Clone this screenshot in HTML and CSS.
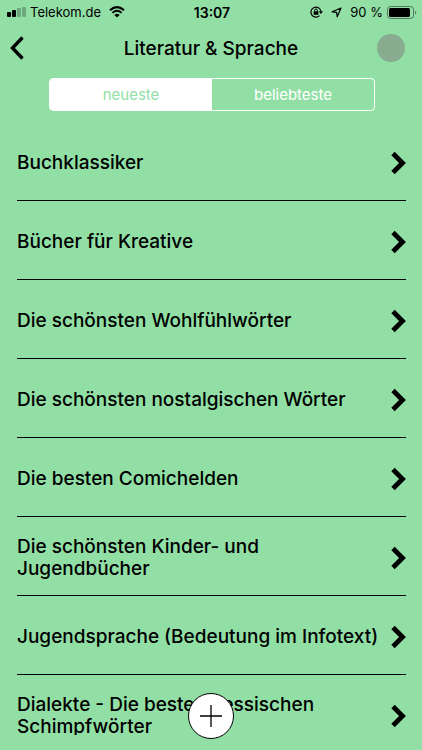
FILE: index.html
```
<!DOCTYPE html>
<html lang="de">

<head>
    <meta charset="UTF-8">
    <meta name="viewport" content="width=device-width, initial-scale=1.0">
    <title>Literatur &amp; Sprache</title>
    <link rel="stylesheet" href="styles.css">
</head>

<body>
    <svg class="sprites" aria-hidden="true">
        <symbol id="chevron" viewBox="0 0 16 24">
            <path d="M3 2.5 L12.5 12 L3 21.5" fill="none" stroke="#000" stroke-width="4.8" />
        </symbol>
    </svg>

    <div class="status-bar">
        <div class="status-left">
            <svg width="19" height="10" viewBox="0 0 19 10">
                <rect x="0" y="5" width="4" height="5" rx="1" />
                <rect x="5" y="3" width="4" height="7" rx="1" />
                <rect x="10" y="1" width="4" height="9" rx="1" opacity=".25" />
                <rect x="15" y="0" width="4" height="10" rx="1" opacity=".25" />
            </svg>
            <span>Telekom.de</span>
            <svg class="wifi" width="16" height="12" viewBox="0 0 16 12">
                <path d="M1 4.3 Q8 -2 15 4.3" fill="none" stroke="#000" stroke-width="2.2" />
                <path d="M3.4 6.9 Q8 2.8 12.6 6.9" fill="none" stroke="#000" stroke-width="1.9" />
                <path d="M5.4 8.9 Q8 6.8 10.6 8.9 L8 11.6 Z" />
            </svg>
        </div>
        <span class="clock">13:07</span>
        <div class="status-right">
            <svg width="13" height="12" viewBox="0 0 13 12">
                <path d="M9.5 9.7 A5 5 0 1 1 10.9 5.4" fill="none" stroke="#000" stroke-width="1.2" />
                <path d="M8.7 5.2 H13 L10.9 8 Z" />
                <rect x="3.6" y="5.3" width="4.8" height="3.5" rx=".5" />
                <path d="M4.6 5.5 V4.4 A1.4 1.4 0 0 1 7.4 4.4 V5.5" fill="none" stroke="#000" />
            </svg>
            <svg class="location" width="11" height="11" viewBox="0 0 11 11">
                <path d="M10 1 L6.2 9.8 L5.6 5.4 L1.2 4.8 Z" fill="none" stroke="#000" stroke-width="1.2" stroke-linejoin="round" />
            </svg>
            <span>90 %</span>
            <svg width="30" height="13" viewBox="0 0 30 13">
                <rect x=".5" y=".5" width="26" height="12" rx="3" fill="none" stroke="#000" stroke-opacity=".45" />
                <rect x="2" y="2" width="21" height="9" rx="1.5" />
                <path d="M28 4.5 Q30.5 6.5 28 8.5 Z" opacity=".45" />
            </svg>
        </div>
    </div>

    <header class="header">
        <button class="back" aria-label="Zurück">
            <svg width="16" height="24" viewBox="0 0 16 24">
                <path d="M13.5 1.5 L3.5 12 L13.5 22.5" fill="none" stroke="#000" stroke-width="3.4" />
            </svg>
        </button>
        <h1>Literatur &amp; Sprache</h1>
        <button class="profile" aria-label="Profil"></button>
    </header>

    <div class="tabs">
        <button class="tab active">neueste</button>
        <button class="tab">beliebteste</button>
    </div>

    <main class="list">
        <a class="item" href="#"><span>Buchklassiker</span><svg class="chevron"><use href="#chevron" /></svg></a>
        <a class="item" href="#"><span>Bücher für Kreative</span><svg class="chevron"><use href="#chevron" /></svg></a>
        <a class="item" href="#"><span>Die schönsten Wohlfühlwörter</span><svg class="chevron"><use href="#chevron" /></svg></a>
        <a class="item" href="#"><span>Die schönsten nostalgischen Wörter</span><svg class="chevron"><use href="#chevron" /></svg></a>
        <a class="item" href="#"><span>Die besten Comichelden</span><svg class="chevron"><use href="#chevron" /></svg></a>
        <a class="item" href="#"><span>Die schönsten Kinder- und Jugendbücher</span><svg class="chevron"><use href="#chevron" /></svg></a>
        <a class="item" href="#"><span>Jugendsprache (Bedeutung im Infotext)</span><svg class="chevron"><use href="#chevron" /></svg></a>
        <a class="item" href="#"><span>Dialekte - Die besten hessischen Schimpfwörter</span><svg class="chevron"><use href="#chevron" /></svg></a>
    </main>

    <button class="add" aria-label="Hinzufügen">
        <svg width="22" height="22" viewBox="0 0 22 22">
            <path d="M11 0 V22 M0 11 H22" stroke="#000" stroke-width="1.3" />
        </svg>
    </button>
</body>

</html>
```

FILE: styles.css
```
* {
    box-sizing: border-box;
}

body {
    height: 100vh;
    margin: 0;
    padding-bottom: 15px;
    display: flex;
    flex-direction: column;
    overflow: hidden;
    font-family: Inter, sans-serif;
    color: #000;
    background-color: #92dfa6;
}

button {
    padding: 0;
    border: none;
    background: none;
    font-family: inherit;
    cursor: pointer;
}

svg {
    display: block;
    flex-shrink: 0;
}

.sprites {
    position: absolute;
    width: 0;
    height: 0;
}

/* Statusleiste */
.status-bar {
    height: 24px;
    padding: 0 5px 0 7px;
    display: grid;
    grid-template-columns: 1fr auto 1fr;
    align-items: center;
    font-size: 13px;
    flex-shrink: 0;
}

.status-left,
.status-right {
    display: flex;
    align-items: center;
    gap: 4px;
}

.status-right {
    justify-content: flex-end;
}

.wifi {
    margin-left: 4px;
}

.location {
    margin: 0 4px;
}

.clock {
    font-size: 14px;
    font-weight: 600;
}

/* Kopfzeile */
.header {
    height: 48px;
    padding: 0 17px 0 9px;
    display: grid;
    grid-template-columns: 36px 1fr 28px;
    align-items: center;
    flex-shrink: 0;
}

.header h1 {
    margin: 0;
    text-align: center;
    font-size: 19px;
    font-weight: 500;
}

.profile {
    width: 28px;
    height: 28px;
    border-radius: 50%;
    background-color: #87ac90;
}

.tabs {
    height: 33px;
    margin: 6px 47px 11px 49px;
    display: flex;
    border: 1px solid #fff;
    border-radius: 4px;
    overflow: hidden;
    flex-shrink: 0;
}

.tab {
    flex: 1;
    font-size: 15px;
    color: #fff;
}

.tab.active {
    background-color: #fff;
    color: #92dfa6;
}

/* Liste */
.list {
    flex: 1;
    min-height: 0;
    padding: 0 16px 0 17px;
    overflow: hidden;
}

.item {
    height: 79px;
    padding-top: 3px;
    display: flex;
    align-items: center;
    justify-content: space-between;
    border-bottom: 1px solid #000;
    font-size: 19px;
    font-weight: 500;
    line-height: 22px;
    color: #000;
    text-decoration: none;
}

.item span {
    max-width: 364px;
}

.chevron {
    width: 16px;
    height: 24px;
}

.add {
    position: fixed;
    left: 50%;
    bottom: 11px;
    width: 46px;
    height: 46px;
    display: flex;
    align-items: center;
    justify-content: center;
    transform: translateX(-50%);
    border: 1px solid #000;
    border-radius: 50%;
    background-color: #fff;
}
```
